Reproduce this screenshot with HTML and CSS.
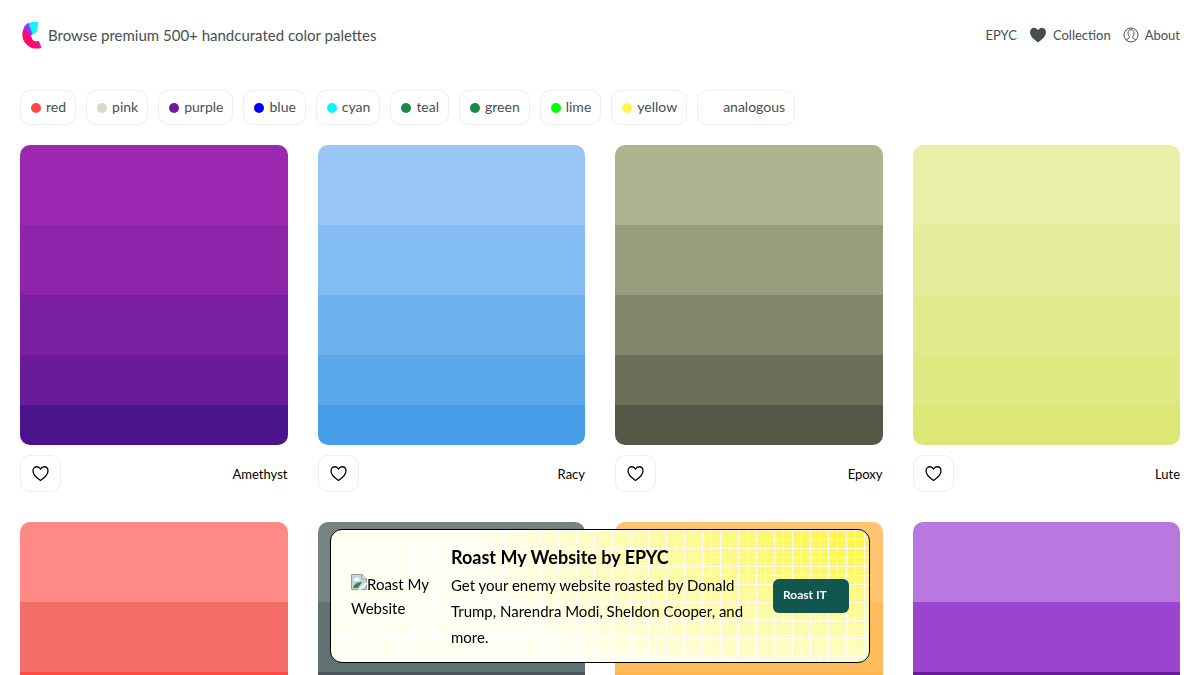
FILE: index.html
```
<!DOCTYPE html>
<html lang="en">
<head>
  <meta charset="utf-8">
  <meta name="viewport" content="width=device-width, initial-scale=1.0">
  <title>Color Palettes</title>
  <link rel="stylesheet" href="styles.css">
</head>
<body>
  <svg class="sprite" aria-hidden="true">
    <symbol id="heart" viewBox="1 2 22 20">
      <path d="M12 21.200C10.500 20 2 14.800 2 8.500 2 5.300 4.300 3 7.200 3c2 0 3.700 1.200 4.800 3 1.100-1.800 2.800-3 4.800-3C19.700 3 22 5.300 22 8.500c0 6.300-8.500 11.500-10 12.700z"/>
    </symbol>
  </svg>

  <header class="header">
    <a class="brand" href="#">
      <svg class="logo" viewBox="0 0 20 28" aria-hidden="true">
        <path fill="#ff0a6c" d="M3.500 4C-2 12 0 21 7 25.500c4 2.500 8 2.500 12 1.500l-3-7c-3 1-6 0-6.500-4z"/>
        <path fill="#9333ff" d="M7 1.500C5 2.500 3 4.500 2 7l6.500 8 4-3z"/>
        <path fill="#10f3fa" d="M6.500 2.500C9 1 12 .5 16 1c0 5-.5 9-2.500 11l-3 1.500z"/>
        <path fill="#9333ff" d="M15.500 20.500l1.500-.5 2.500 6.500-1.500.5z"/>
      </svg>
      <span>Browse premium 500+ handcurated color palettes</span>
    </a>
    <nav class="nav">
      <a href="#">EPYC</a>
      <a href="#"><svg class="nav-heart" aria-hidden="true"><use href="#heart"/></svg>Collection</a>
      <a href="#">
        <svg class="nav-user" viewBox="0 0 16 16" aria-hidden="true">
          <circle cx="8" cy="8" r="7"/>
          <path d="M3.500 13c.5-1.500 3-1.500 3-2.500S5 8.500 5 6c0-2 1.200-3.300 3-3.300S11 4 11 6c0 2.500-1.500 3.500-1.500 4.500s2.500 1 3 2.500"/>
        </svg>About</a>
    </nav>
  </header>

  <div class="filters">
    <button class="chip"><span class="dot red"></span>red</button>
    <button class="chip"><span class="dot pink"></span>pink</button>
    <button class="chip"><span class="dot purple"></span>purple</button>
    <button class="chip"><span class="dot blue"></span>blue</button>
    <button class="chip"><span class="dot cyan"></span>cyan</button>
    <button class="chip"><span class="dot teal"></span>teal</button>
    <button class="chip"><span class="dot green"></span>green</button>
    <button class="chip"><span class="dot lime"></span>lime</button>
    <button class="chip"><span class="dot yellow"></span>yellow</button>
    <button class="chip"><span class="dot"></span>analogous</button>
  </div>

  <main class="palettes" id="palettes"></main>

  <aside class="promo">
    <div class="promo-img">
      <svg viewBox="0 0 16 16" aria-hidden="true">
        <path fill="#c9d3e0" d="M1 1h10l4 4v10H1z"/>
        <path fill="#fff" d="M3 7a1.500 1.500 0 0 1 1-2.500 2 2 0 0 1 3.500 0A1.500 1.500 0 0 1 8 7zM11 1v4h4z"/>
        <path fill="#2f8f4a" d="M2 14c1-4 4-6 9-6l-4 6z"/>
        <path fill="none" stroke="#999" d="M.5.500h10.500l4.500 4.500v10.500H.5zM11 .5V5h4.500"/>
        <path fill="none" stroke="#fff" stroke-width="2" d="M8 16l8-7"/>
      </svg>Roast My Website
    </div>
    <div class="promo-text">
      <h2>Roast My Website by EPYC</h2>
      <p>Get your enemy website roasted by Donald Trump, Narendra Modi, Sheldon Cooper, and more.</p>
    </div>
    <button class="promo-btn">Roast IT</button>
  </aside>

<script>
  const palettes = [
    { name: "Amethyst", colors: ["#9c27b0", "#8e24aa", "#7b1fa2", "#6a1b9a", "#4a148c"] },
    { name: "Racy", colors: ["#99c7f5", "#82bcf1", "#6cb1ee", "#5aa7ec", "#489de9"] },
    { name: "Epoxy", colors: ["#afb38f", "#999c7d", "#83866b", "#6c6f58", "#565746"] },
    { name: "Lute", colors: ["#e7f0a6", "#e4ed9a", "#e1eb8e", "#dfe982", "#dde775"] },
    { colors: ["#ff8a85", "#f56d69", "#ff4b45", "#e53935", "#c62828"] },
    { colors: ["#758483", "#5f7172", "#4a5459", "#37474f", "#263238"] },
    { colors: ["#ffc46f", "#ffbb5c", "#ffb650", "#ff9800", "#f57c00"] },
    { colors: ["#b878e0", "#9b44cf", "#6a1b9a", "#4a148c", "#311b92"] }
  ];

  function footer(name) {
    if (!name) return "";
    return `
      <div class="card-footer">
        <button class="like" aria-label="Like"><svg aria-hidden="true"><use href="#heart"/></svg></button>
        <span>${name}</span>
      </div>`;
  }

  document.getElementById("palettes").innerHTML = palettes.map(p => `
    <article class="card">
      <div class="swatches">
        ${p.colors.map(c => `<div style="background:${c}"></div>`).join("")}
      </div>
      ${footer(p.name)}
    </article>
  `).join("");
</script>
</body>
</html>
```
FILE: styles.css
```
* { box-sizing: border-box; }
body { margin: 0; padding: 20px; background: #fff; color: #000; font-family: Lato, sans-serif; font-size: 13px; overflow-x: hidden; }
button { font: inherit; cursor: pointer; }
a { color: #464f4f; text-decoration: none; }
.sprite { display: none; }

.header { display: flex; align-items: center; justify-content: space-between; height: 30px; margin-bottom: 40px; }
.brand { display: flex; align-items: center; gap: 6px; font-size: 15px; }
.logo { width: 20px; height: 28px; margin-left: 2px; }
.nav { display: flex; align-items: center; gap: 12px; }
.nav a { display: flex; align-items: center; }
.nav-heart { width: 18px; height: 16px; margin-right: 6px; fill: #464f4f; }
.nav-user { width: 16px; height: 16px; margin-right: 6px; fill: none; stroke: #464f4f; }

.filters { display: flex; flex-wrap: wrap; gap: 10px; margin-bottom: 20px; }
.chip { display: flex; align-items: center; height: 35px; padding: 0 9px 2px 10px; border: 1px solid #eeeeea; border-radius: 10px; background: #fff; color: #464f4f; font-size: 14px; }
.dot { width: 10px; height: 10px; margin: 2px 5px 0 0; border-radius: 50%; }
.red { background: #ff4b45; }
.pink { background: #dad8c8; }
.purple { background: #6a1b9a; }
.blue { background: #00f; }
.cyan { background: #10f3fa; }
.teal, .green { background: #188a48; }
.lime { background: #0f0; }
.yellow { background: #fff64d; }

.palettes { display: grid; grid-template-columns: repeat(4, 1fr); gap: 30px; }
.swatches { display: grid; grid-template-rows: 80px 70px 60px 50px 40px; border-radius: 10px; overflow: hidden; }
.card-footer { display: flex; align-items: center; justify-content: space-between; margin-top: 10px; }
.like { display: flex; align-items: center; justify-content: center; width: 41px; height: 37px; padding: 0; border: 1px solid #eeeeea; border-radius: 10px; background: #fff; }
.like svg { width: 17px; height: 15px; fill: none; stroke: #000; stroke-width: 1.7; }

.promo {
  position: fixed;
  bottom: 12px;
  left: 50%;
  transform: translateX(-50%);
  display: flex;
  align-items: center;
  gap: 20px;
  width: 540px;
  max-width: 100%;
  padding: 12px 20px;
  border: 1px solid #000;
  border-radius: 12px;
  background:
    repeating-linear-gradient(90deg, transparent 0 2px, #fff 2px 3px, transparent 3px 9px),
    repeating-linear-gradient(#fff 0 1px, transparent 1px 9px),
    radial-gradient(ellipse 100% 180% at 100% 0, #fff64d 8%, #fffbaa 42%, #fffff0 75%);
}
.promo-img { flex: none; width: 80px; font-size: 15px; line-height: 24px; }
.promo-img svg { width: 16px; height: 16px; }
.promo-text { flex: 1; }
.promo h2 { margin: 0; font-size: 18px; line-height: 30px; }
.promo p { margin: 0; font-size: 15px; line-height: 26px; }
.promo-btn { width: 76px; height: 34px; padding: 0 10px 4px; border: 0; border-radius: 6px; background: #125650; color: #fff; font-size: 12px; font-weight: bold; text-align: left; }
```
